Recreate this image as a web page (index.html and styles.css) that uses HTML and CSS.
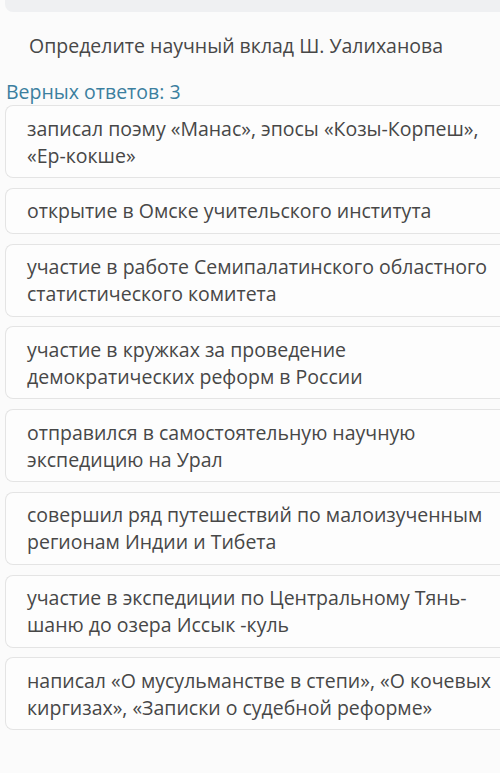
FILE: index.html
```html
<!DOCTYPE html>
<html lang="ru">
<head>
  <meta charset="UTF-8" />
  <meta name="viewport" content="width=device-width, initial-scale=1.0"/>
  <title>Вопрос</title>
  <link rel="stylesheet" href="styles.css">
</head>
<body>
  <!-- Top panel (cut off) -->
  <div class="top-bar"></div>

  <div class="question">Определите научный вклад Ш. Уалиханова</div>
  <div class="correct-count">Верных ответов: 3</div>

  <div class="answers">
    <div class="answer">записал поэму «Манас», эпосы «Козы-Корпеш», «Ер-кокше»</div>
    <div class="answer">открытие в Омске учительского института</div>
    <div class="answer">участие в работе Семипалатинского областного статистического комитета</div>
    <div class="answer">участие в кружках за проведение демократических реформ в России</div>
    <div class="answer">отправился в самостоятельную научную экспедицию на Урал</div>
    <div class="answer">совершил ряд путешествий по малоизученным регионам Индии и Тибета</div>
    <div class="answer">участие в экспедиции по Центральному Тянь-шаню до озера Иссык -куль</div>
    <div class="answer">написал «О мусульманстве в степи», «О кочевых киргизах», «Записки о судебной реформе»</div>
  </div>
</body>
</html>
```

FILE: styles.css
```css
body {
  margin: 0;
  font-family: 'Open Sans', sans-serif;
  background-color: #fbfbfb;
  color: #474747;
}

.top-bar {
  margin-left: 5px;
  height: 12px;
  background-color: #eff0f2;
  border-radius: 0 0 0 8px;
}

.question {
  padding: 20px 0 0 29px;
  font-size: 19.5px;
  line-height: 27px;
}

.correct-count {
  padding: 19px 0 0 6px;
  font-size: 19.5px;
  line-height: 27px;
  color: #3b7f9f;
}

/* cards run off the right edge of the screen */
.answers {
  display: flex;
  flex-direction: column;
  gap: 9.75px;
  margin-left: 5px;
}

.answer {
  background-color: #fdfdfd;
  border: 1px solid #e4e4e4;
  border-right: none;
  border-radius: 8px 0 0 8px;
  padding: 8.5px 3px 8.5px 21px;
  font-size: 19.5px;
  line-height: 27px;
}
```
